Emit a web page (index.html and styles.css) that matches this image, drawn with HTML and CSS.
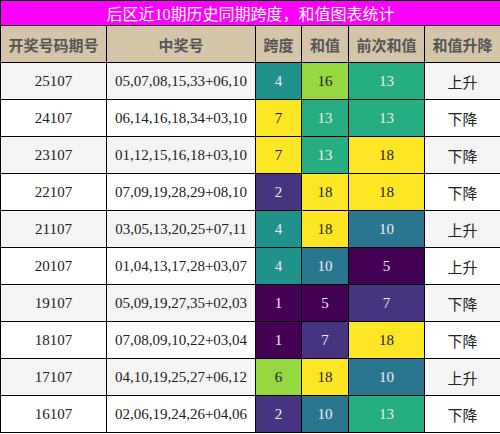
FILE: index.html
```html
<!DOCTYPE html>
<html lang="zh">

<head>
    <meta charset="UTF-8">
    <title>后区跨度和值统计</title>
    <link rel="stylesheet" href="styles.css">
</head>

<body>
    <table class="stats">
        <colgroup>
            <col class="c-issue">
            <col class="c-nums">
            <col class="c-span">
            <col class="c-sum">
            <col class="c-prev">
            <col class="c-trend">
        </colgroup>
        <thead>
            <tr>
                <th class="title" colspan="6">后区近10期历史同期跨度，和值图表统计</th>
            </tr>
            <tr class="head">
                <th>开奖号码期号</th>
                <th>中奖号</th>
                <th>跨度</th>
                <th>和值</th>
                <th>前次和值</th>
                <th>和值升降</th>
            </tr>
        </thead>
        <tbody>
            <tr>
                <td>25107</td><td>05,07,08,15,33+06,10</td>
                <td class="v4">4</td><td class="v16">16</td><td class="v13">13</td><td>上升</td>
            </tr>
            <tr>
                <td>24107</td><td>06,14,16,18,34+03,10</td>
                <td class="v18">7</td><td class="v13">13</td><td class="v13">13</td><td>下降</td>
            </tr>
            <tr>
                <td>23107</td><td>01,12,15,16,18+03,10</td>
                <td class="v18">7</td><td class="v13">13</td><td class="v18">18</td><td>下降</td>
            </tr>
            <tr>
                <td>22107</td><td>07,09,19,28,29+08,10</td>
                <td class="v7">2</td><td class="v18">18</td><td class="v18">18</td><td>下降</td>
            </tr>
            <tr>
                <td>21107</td><td>03,05,13,20,25+07,11</td>
                <td class="v4">4</td><td class="v18">18</td><td class="v10">10</td><td>上升</td>
            </tr>
            <tr>
                <td>20107</td><td>01,04,13,17,28+03,07</td>
                <td class="v4">4</td><td class="v10">10</td><td class="v5">5</td><td>上升</td>
            </tr>
            <tr>
                <td>19107</td><td>05,09,19,27,35+02,03</td>
                <td class="v5">1</td><td class="v5">5</td><td class="v7">7</td><td>下降</td>
            </tr>
            <tr>
                <td>18107</td><td>07,08,09,10,22+03,04</td>
                <td class="v5">1</td><td class="v7">7</td><td class="v18">18</td><td>下降</td>
            </tr>
            <tr>
                <td>17107</td><td>04,10,19,25,27+06,12</td>
                <td class="v16">6</td><td class="v18">18</td><td class="v10">10</td><td>上升</td>
            </tr>
            <tr>
                <td>16107</td><td>02,06,19,24,26+04,06</td>
                <td class="v7">2</td><td class="v10">10</td><td class="v13">13</td><td>下降</td>
            </tr>
        </tbody>
    </table>
</body>

</html>
```

FILE: styles.css
```css
body {
    margin: 0;
    padding: 0;
    background-color: white;
    font-family: "Liberation Serif", "Noto Sans CJK SC", serif;
}

.stats {
    width: 500px;
    border-collapse: collapse;
    table-layout: fixed;
}

.c-issue { width: 106px; }
.c-nums { width: 149px; }
.c-span { width: 46px; }
.c-sum { width: 47px; }
.c-prev { width: 76px; }
.c-trend { width: 76px; }

.stats th,
.stats td {
    border: 1px solid #000;
    padding: 0;
    text-align: center;
}

.title {
    background-color: #ff00ff;
    color: white;
    font-size: 16px;
    font-weight: normal;
    height: 23px;
    border-top: none;
    border-left: none;
    border-right: none;
}

.head th {
    background-color: #d5c5a8;
    color: #555;
    font-family: "Noto Sans CJK SC", sans-serif;
    font-size: 15px;
    font-weight: bold;
    height: 36px;
}

.stats td {
    height: 36px;
    font-size: 15px;
    color: #222;
}

tbody tr:nth-child(odd) td {
    background-color: #f4f4f4;
}

tbody tr:nth-child(even) td {
    background-color: white;
}

/* viridis scale */
tbody tr td.v5 { background-color: #440154; color: #eee; }
tbody tr td.v7 { background-color: #463480; color: #eee; }
tbody tr td.v10 { background-color: #2a768e; color: #eee; }
tbody tr td.v4 { background-color: #21918c; color: #eee; }
tbody tr td.v13 { background-color: #26ad81; color: #eee; }
tbody tr td.v16 { background-color: #95d840; color: #222; }
tbody tr td.v18 { background-color: #fde725; color: #222; }
```
